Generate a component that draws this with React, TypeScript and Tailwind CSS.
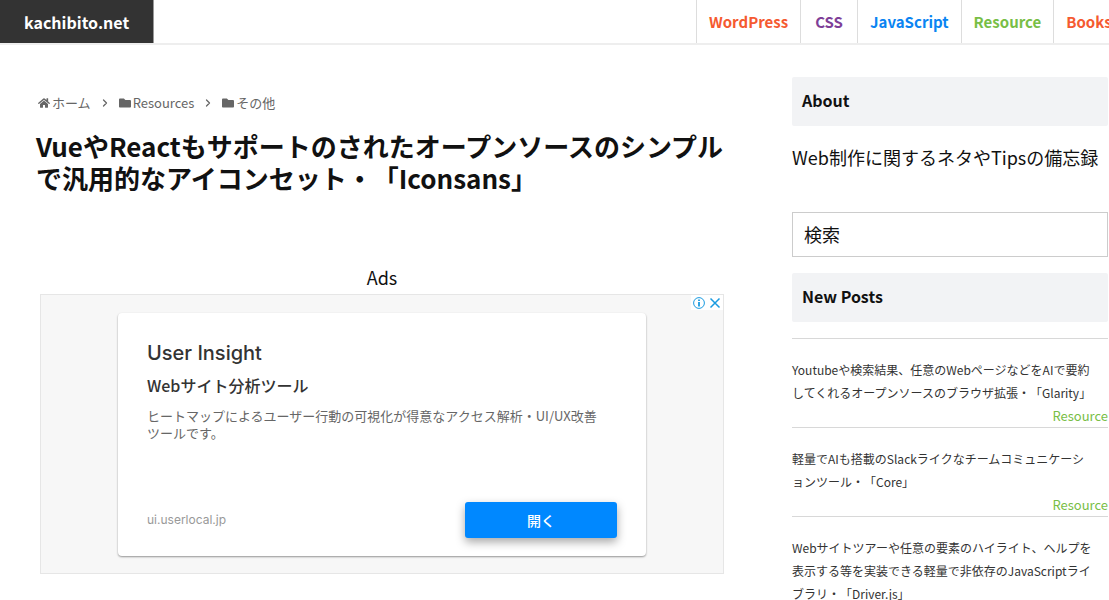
import { FaFolder, FaHome } from "react-icons/fa";
import { ChevronRight } from "lucide-react";

const navItems = [
  { label: "WordPress", color: "text-[#f55a30]" },
  { label: "CSS", color: "text-[#7f3f98]" },
  { label: "JavaScript", color: "text-[#0a84f2]" },
  { label: "Resource", color: "text-[#78be46]" },
  { label: "Books", color: "text-[#f55a30]" },
];

const posts = [
  [
    "Youtubeや検索結果、任意のWebページなどをAIで要約",
    "してくれるオープンソースのブラウザ拡張・「Glarity」",
  ],
  ["軽量でAIも搭載のSlackライクなチームコミュニケーシ", "ョンツール・「Core」"],
  [
    "Webサイトツアーや任意の要素のハイライト、ヘルプを",
    "表示する等を実装できる軽量で非依存のJavaScriptライ",
    "ブラリ・「Driver.js」",
  ],
];

function Header() {
  return (
    <header className="flex h-[45px] justify-between overflow-hidden border-b-2 border-[#eeeeee]">
      <a
        href="#"
        className="flex items-center border-r border-[#999999] bg-[#333333] px-6 text-[16px] font-bold text-white"
      >
        kachibito.net
      </a>
      <nav className="flex w-[413px] shrink-0 overflow-hidden">
        {navItems.map((item) => (
          <a
            key={item.label}
            href="#"
            className={`flex min-w-[57px] shrink-0 items-center justify-center border-l border-[#dddddd] px-3 pt-0.5 text-[15px] font-bold ${item.color}`}
          >
            {item.label}
          </a>
        ))}
      </nav>
    </header>
  );
}

function Breadcrumbs() {
  return (
    <nav className="ml-0.5 flex h-5 items-center text-[13px] text-[#666666]">
      <a href="#" className="flex items-center gap-0.5">
        <FaHome className="size-3" />
        ホーム
      </a>
      <ChevronRight className="mx-2 size-3" strokeWidth={2.5} />
      <a href="#" className="flex items-center gap-0.5">
        <FaFolder className="size-3" />
        Resources
      </a>
      <ChevronRight className="mx-2 size-3" strokeWidth={2.5} />
      <a href="#" className="flex items-center gap-0.5">
        <FaFolder className="size-3" />
        その他
      </a>
    </nav>
  );
}

function Ad() {
  return (
    <section className="relative mx-1 mt-[3px] border border-[#e6e6e6] bg-[#f7f7f7] px-[77px] pt-[18px] pb-[17px]">
      <div className="absolute top-0 right-0 flex h-[15px] items-center gap-1 bg-white px-0.5 text-[#1a9be0]">
        <svg viewBox="0 0 12 12" className="size-3" fill="none" stroke="currentColor">
          <circle cx="6" cy="6" r="5.4" />
          <path d="M6 5v4.4M6 2.5v1.5" strokeWidth="1.8" />
        </svg>
        <svg viewBox="0 0 12 12" className="size-3" fill="none" stroke="currentColor" strokeWidth="1.5">
          <path d="M1.5 1.5l9 9M10.5 1.5l-9 9" />
        </svg>
      </div>
      <div className="flex h-[243px] flex-col rounded bg-white px-[29px] pt-[27px] pb-[18px] shadow-[0_1px_2px_rgba(0,0,0,0.4)]">
        <h2 className="font-['Inter','Noto_Sans_CJK_JP',sans-serif] text-[20px] leading-[26px] font-medium text-[#333333]">
          User Insight
        </h2>
        <h3 className="mt-[7px] text-[16px] leading-6 font-medium text-[#333333]">
          Webサイト分析ツール
        </h3>
        <p className="mt-2.5 text-[13px] leading-[17px] text-[#666666]">
          ヒートマップによるユーザー行動の可視化が得意なアクセス解析・UI/UX改善
          <br />
          ツールです。
        </p>
        <div className="mt-auto flex items-center justify-between">
          <span className="font-['Inter',sans-serif] text-[12px] text-[#999999]">
            ui.userlocal.jp
          </span>
          <button
            type="button"
            className="h-9 w-[152px] rounded-[3px] bg-[#0088ff] text-[14px] font-medium text-white shadow-[0_4px_10px_rgba(0,0,0,0.35)]"
          >
            開く
          </button>
        </div>
      </div>
    </section>
  );
}

function SideHeading({ children }: { children: string }) {
  return (
    <h2 className="rounded-[2px] bg-[#f2f3f5] px-2.5 pt-[11px] pb-[13px] text-[16px] leading-[25px] font-bold">
      {children}
    </h2>
  );
}

function Sidebar() {
  return (
    <aside className="w-[316px] shrink-0 pt-8">
      <SideHeading>About</SideHeading>
      <p className="mt-[15px] text-[18px] leading-8">Web制作に関するネタやTipsの備忘録</p>
      <input
        type="search"
        aria-label="検索"
        placeholder="検索"
        className="mt-[39px] mb-4 block h-[45px] w-full border border-[#cccccc] px-[11px] pb-0.5 text-[18px] outline-none placeholder:text-[#111111]"
      />
      <SideHeading>New Posts</SideHeading>
      <ul className="mt-4 border-t border-[#d8d8d8]">
        {posts.map((lines) => (
          <li
            key={lines[0]}
            className="border-b border-[#d8d8d8] pt-[19px] text-[12px] leading-[23px]"
          >
            <a href="#" className="block text-[#333333]">
              {lines.map((line) => (
                <span key={line} className="block">
                  {line}
                </span>
              ))}
            </a>
            <a href="#" className="block text-right text-[13px] text-[#78be46]">
              Resource
            </a>
          </li>
        ))}
      </ul>
    </aside>
  );
}

export default function App() {
  return (
    <div className="h-screen overflow-hidden bg-white font-['Noto_Sans_CJK_JP',sans-serif] text-[#111111] [text-spacing-trim:space-all]">
      <Header />
      <div className="flex gap-16 pr-px pl-9">
        <main className="min-w-0 flex-1 pt-12">
          <Breadcrumbs />
          <h1 className="mt-[17px] text-[26px] leading-8 font-bold">
            VueやReactもサポートのされたオープンソースのシンプルで汎用的なアイコンセット・「Iconsans」
          </h1>
          <p className="mt-[70px] text-center text-[18px] leading-[27px]">Ads</p>
          <Ad />
        </main>
        <Sidebar />
      </div>
    </div>
  );
}
